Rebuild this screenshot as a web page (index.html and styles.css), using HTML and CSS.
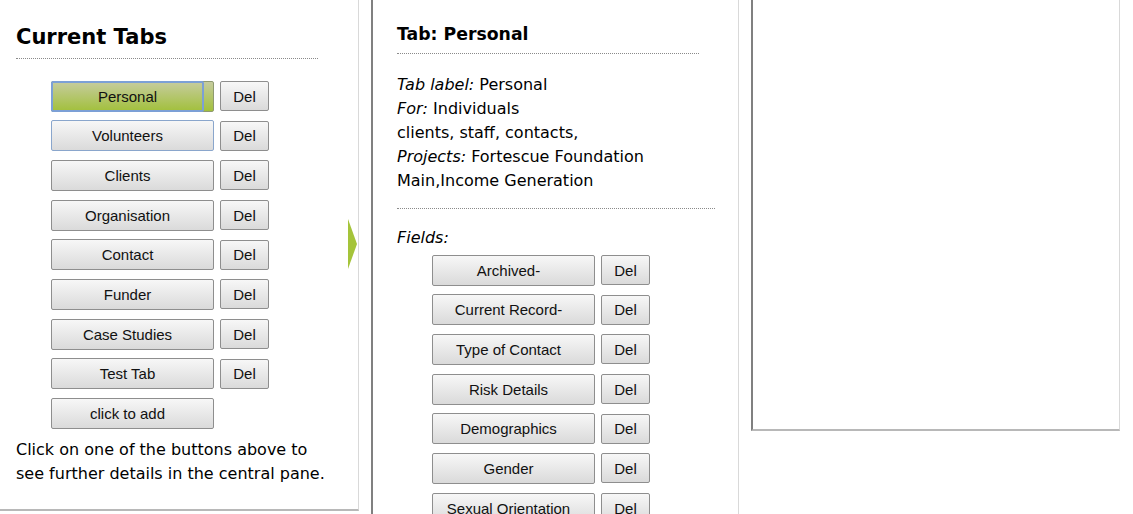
FILE: index.html
```html
<!DOCTYPE html>
<html>
<head>
<meta charset="utf-8">
<title>Tabs</title>
<link rel="stylesheet" href="styles.css">
</head>
<body>
<div class="layout">
  <section class="pane pane-left">
    <h2 class="title">Current Tabs</h2>
    <div class="btn-list">
      <div class="row"><button class="btn btn-main btn-active">Personal</button><button class="btn btn-del">Del</button></div>
      <div class="row"><button class="btn btn-main btn-hover">Volunteers</button><button class="btn btn-del">Del</button></div>
      <div class="row"><button class="btn btn-main">Clients</button><button class="btn btn-del">Del</button></div>
      <div class="row"><button class="btn btn-main">Organisation</button><button class="btn btn-del">Del</button></div>
      <div class="row"><button class="btn btn-main">Contact</button><button class="btn btn-del">Del</button></div>
      <div class="row"><button class="btn btn-main">Funder</button><button class="btn btn-del">Del</button></div>
      <div class="row"><button class="btn btn-main">Case Studies</button><button class="btn btn-del">Del</button></div>
      <div class="row"><button class="btn btn-main">Test Tab</button><button class="btn btn-del">Del</button></div>
      <div class="row"><button class="btn btn-main">click to add</button></div>
    </div>
    <p class="hint">Click on one of the buttons above to see further details in the central pane.</p>
    <span class="arrow"></span>
  </section>
  <section class="pane pane-center">
    <h3 class="subtitle">Tab: Personal</h3>
    <div class="details">
      <div><em>Tab label:</em> Personal</div>
      <div><em>For:</em> Individuals</div>
      <div>clients, staff, contacts,</div>
      <div><em>Projects:</em> Fortescue Foundation</div>
      <div>Main,Income Generation</div>
    </div>
    <div class="fields-label"><em>Fields:</em></div>
    <div class="btn-list">
      <div class="row"><button class="btn btn-main">Archived-</button><button class="btn btn-del">Del</button></div>
      <div class="row"><button class="btn btn-main">Current Record-</button><button class="btn btn-del">Del</button></div>
      <div class="row"><button class="btn btn-main">Type of Contact</button><button class="btn btn-del">Del</button></div>
      <div class="row"><button class="btn btn-main">Risk Details</button><button class="btn btn-del">Del</button></div>
      <div class="row"><button class="btn btn-main">Demographics</button><button class="btn btn-del">Del</button></div>
      <div class="row"><button class="btn btn-main">Gender</button><button class="btn btn-del">Del</button></div>
      <div class="row"><button class="btn btn-main">Sexual Orientation</button><button class="btn btn-del">Del</button></div>
    </div>
  </section>
  <section class="pane pane-right"></section>
</div>
</body>
</html>
```
FILE: styles.css
```css
html, body {
  margin: 0;
  padding: 0;
  background: #ffffff;
}
body {
  font-family: "DejaVu Sans", Verdana, sans-serif;
  font-size: 16px;
  line-height: 24px;
  color: #000;
  overflow: hidden;
  height: 514px;
}
.layout {
  display: flex;
  align-items: flex-start;
  gap: 12px;
}
.pane {
  box-sizing: border-box;
  background: #fff;
}
.pane-left {
  position: relative;
  width: 359px;
  height: 511px;
  padding: 24px 0 0 16px;
  border-right: 1px solid #d9d9d9;
  border-bottom: 2px solid #b8b8b8;
}
.title {
  margin: 0;
  width: 302px;
  font-size: 21px;
  line-height: 26px;
  font-weight: bold;
  padding-bottom: 8px;
  border-bottom: 1px dotted #8a8a8a;
}
.pane-left .btn-list {
  margin-top: 21.5px;
}
.btn-list {
  display: flex;
  flex-direction: column;
  gap: 8.7px;
  padding-left: 35px;
}
.row {
  display: flex;
  align-items: center;
  gap: 6px;
  height: 31px;
}
.btn {
  box-sizing: border-box;
  height: 31px;
  margin: 0;
  padding: 0;
  font-family: "Liberation Sans", Arial, sans-serif;
  font-size: 15px;
  color: #111;
  border: 1px solid #8e8e8e;
  border-radius: 2px;
  background: linear-gradient(#f7f7f7, #dadada);
  position: relative;
}
.btn-main {
  width: 163px;
  padding-right: 10px;
}
.btn-del {
  width: 49px;
  height: 30px;
}
.btn-hover {
  border-color: #8aa6cc;
}
.btn-active {
  background: linear-gradient(#c6cc9e, #a2c03c);
  border-color: #8f9a70;
}
.btn-active::after {
  content: "";
  position: absolute;
  left: -1px;
  top: -1px;
  width: 153px;
  height: 31px;
  box-sizing: border-box;
  border: 2px solid #7ca0d6;
  border-radius: 2px;
}
.hint {
  margin: 8.5px 0 0 0;
  width: 320px;
}
.arrow {
  position: absolute;
  right: 1px;
  top: 219px;
  width: 0;
  height: 0;
  border-left: 9px solid #a5c43a;
  border-top: 25px solid transparent;
  border-bottom: 25px solid transparent;
}
.pane-center {
  width: 368px;
  height: 560px;
  padding: 23px 0 0 24px;
  border-left: 2px solid #808080;
  border-right: 1px solid #d9d9d9;
}
.subtitle {
  margin: 0;
  width: 302px;
  font-size: 17.3px;
  line-height: 22px;
  font-weight: bold;
  padding-bottom: 8px;
  border-bottom: 1px dotted #8a8a8a;
}
.details {
  margin-top: 18.5px;
  width: 318px;
  padding-bottom: 15.5px;
  border-bottom: 1px dotted #8a8a8a;
}
.fields-label {
  margin-top: 16.5px;
}
.pane-center .btn-list {
  margin-top: 5px;
}
.pane-right {
  width: 369px;
  height: 431px;
  border-left: 2px solid #808080;
  border-right: 1px solid #d9d9d9;
  border-bottom: 2px solid #b8b8b8;
}
```
